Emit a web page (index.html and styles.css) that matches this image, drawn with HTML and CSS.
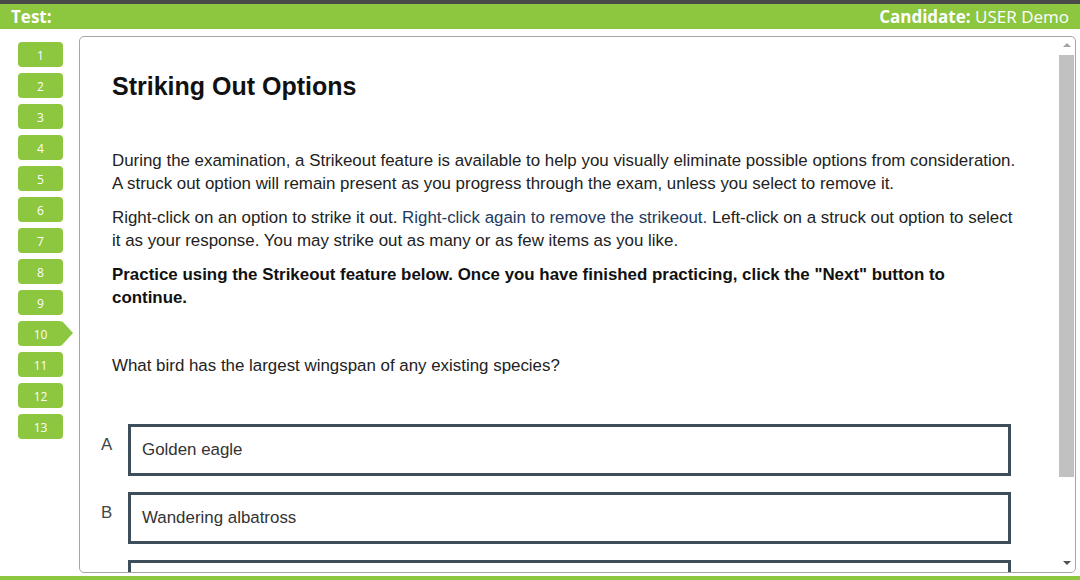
FILE: index.html
```html
<!DOCTYPE html>
<html>
<head>
<meta charset="utf-8">
<link rel="stylesheet" href="styles.css">
</head>
<body>
<div class="topline"></div>
<header class="header">
  <span class="test">Test:</span>
  <span class="cand"><b>Candidate:</b> USER Demo</span>
</header>
<div class="main">
  <nav class="sidebar">
    <div class="qbtn">1</div>
    <div class="qbtn">2</div>
    <div class="qbtn">3</div>
    <div class="qbtn">4</div>
    <div class="qbtn">5</div>
    <div class="qbtn">6</div>
    <div class="qbtn">7</div>
    <div class="qbtn">8</div>
    <div class="qbtn">9</div>
    <div class="qbtn current">10</div>
    <div class="qbtn">11</div>
    <div class="qbtn">12</div>
    <div class="qbtn">13</div>
  </nav>
  <section class="panel">
    <div class="content">
      <h1 class="title">Striking Out Options</h1>
      <p class="para">During the examination, a Strikeout feature is available to help you visually eliminate possible options from consideration. A struck out option will remain present as you progress through the exam, unless you select to remove it.</p>
      <p class="para">Right-click on an option to strike it out. <span class="hl">Right-click again to remove the strikeout.</span> Left-click on a struck out option to select it as your response. You may strike out as many or as few items as you like.</p>
      <p class="para strong">Practice using the Strikeout feature below. Once you have finished practicing, click the "Next" button to continue.</p>
      <p class="question">What bird has the largest wingspan of any existing species?</p>
      <div class="options">
        <div class="option"><span class="letter">A</span><div class="box">Golden eagle</div></div>
        <div class="option"><span class="letter">B</span><div class="box">Wandering albatross</div></div>
        <div class="option"><span class="letter">C</span><div class="box">Andean condor</div></div>
      </div>
    </div>
    <div class="scroll">
      <div class="arrow up"></div>
      <div class="track"><div class="thumb"></div></div>
      <div class="arrow down"></div>
    </div>
  </section>
</div>
<div class="footer"></div>
</body>
</html>
```
FILE: styles.css
```css
html, body {
  margin: 0;
  padding: 0;
  background: #ffffff;
  width: 1080px;
  height: 580px;
  overflow: hidden;
}
body {
  font-family: "Liberation Sans", Arial, sans-serif;
  display: flex;
  flex-direction: column;
}
.topline {
  height: 4px;
  background: #4a4a4a;
}
.header {
  height: 25px;
  background: #8dc63f;
  color: #ffffff;
  font-family: "Open Sans", sans-serif;
  font-size: 17px;
  display: flex;
  align-items: center;
  justify-content: space-between;
  padding: 0 11px 0 11px;
}
.test { font-weight: 700; }
.cand b { font-weight: 700; }
.main {
  display: flex;
  height: 537px;
  padding-top: 7px;
}
.sidebar {
  width: 61px;
  padding: 6px 0 0 18px;
  display: flex;
  flex-direction: column;
  gap: 6px;
}
.qbtn {
  position: relative;
  width: 45px;
  height: 25px;
  box-sizing: border-box;
  background: #8dc63f;
  border-radius: 4px;
  color: #ffffff;
  font-family: "Open Sans", sans-serif;
  font-size: 12px;
  text-align: center;
  padding-top: 3px;
  line-height: 22px;
}
.qbtn.current::after {
  content: "";
  position: absolute;
  left: 44px;
  top: 0;
  border-left: 11px solid #8dc63f;
  border-top: 12.5px solid transparent;
  border-bottom: 12.5px solid transparent;
}
.panel {
  width: 997px;
  height: 537px;
  box-sizing: border-box;
  border: 1px solid #a6a6a6;
  border-radius: 5px;
  display: flex;
  overflow: hidden;
}
.content {
  flex: 1;
  overflow: hidden;
  padding: 34px 40px 0 32px;
  color: #222222;
}
.title {
  margin: 0 0 48px 0;
  font-size: 25px;
  line-height: 30px;
  font-weight: 700;
  color: #111111;
}
.para {
  margin: 0 0 11px 0;
  font-size: 16.9px;
  line-height: 23px;
}
.hl { color: #1d3a5f; }
.strong { font-weight: 700; color: #111111; }
.question {
  margin: 45px 0 0 0;
  font-size: 16.9px;
  line-height: 23px;
}
.options {
  margin-top: 47px;
  display: flex;
  flex-direction: column;
  gap: 16px;
  padding-right: 7px;
}
.option {
  display: flex;
  align-items: flex-start;
}
.letter {
  width: 27px;
  margin-left: -11px;
  padding-top: 11px;
  font-size: 16.9px;
  color: #444444;
}
.box {
  flex: 1;
  height: 52px;
  box-sizing: border-box;
  border: 3px solid #3d4e5a;
  padding-left: 11px;
  display: flex;
  align-items: center;
  font-size: 16.9px;
  color: #333333;
}
.scroll {
  width: 17px;
  display: flex;
  flex-direction: column;
  align-items: center;
}
.arrow {
  width: 0;
  height: 0;
  border-left: 4px solid transparent;
  border-right: 4px solid transparent;
}
.arrow.up {
  margin-top: 6px;
  border-bottom: 4px solid #a3a3a3;
}
.arrow.down {
  margin-bottom: 7px;
  border-top: 4px solid #505050;
}
.track {
  flex: 1;
  width: 15px;
  padding-top: 8px;
  padding-bottom: 84px;
  display: flex;
  flex-direction: column;
}
.thumb {
  flex: 1;
  background: #c1c1c1;
}
.footer {
  margin-top: 3px;
  height: 4px;
  background: #8dc63f;
}
```
